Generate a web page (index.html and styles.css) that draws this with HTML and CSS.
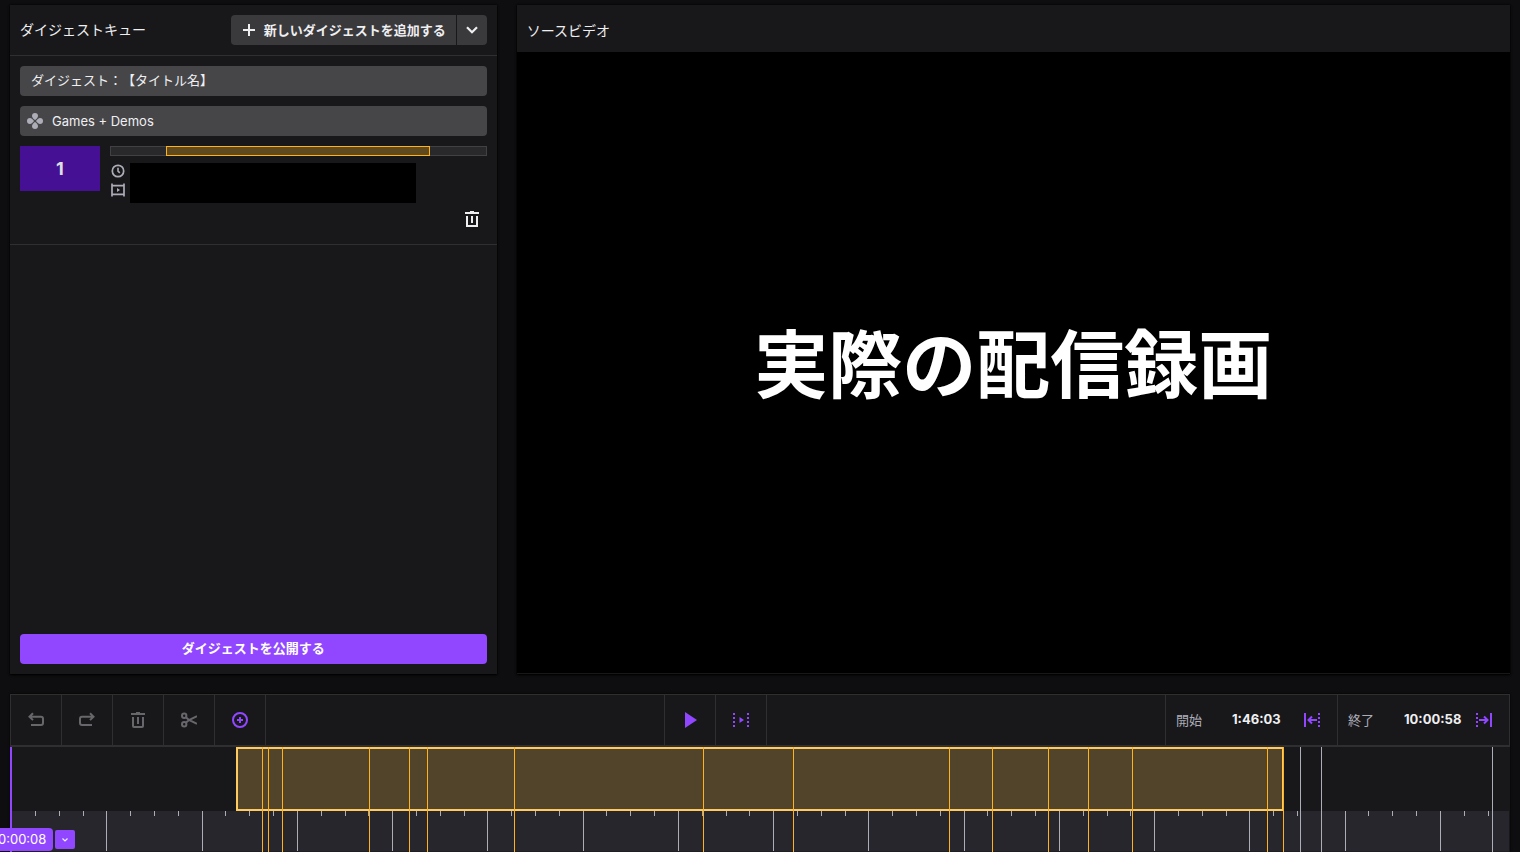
FILE: index.html
```html
<!DOCTYPE html>
<html lang="ja">
<head>
<meta charset="utf-8">
<title>ダイジェスト</title>
<link rel="stylesheet" href="styles.css">
</head>
<body>
<main class="workspace">
  <section class="panel queue">
    <header class="panel-header queue-header">
      <h2 class="panel-title">ダイジェストキュー</h2>
      <div class="split-button">
        <button class="split-main" type="button">
          <svg class="plus-icon" viewBox="0 0 12 12" aria-hidden="true"><path d="M6 0v12M0 6h12" stroke="currentColor" stroke-width="2" fill="none"/></svg>
          <span>新しいダイジェストを追加する</span>
        </button>
        <button class="split-toggle" type="button" aria-label="その他">
          <svg class="chevron" viewBox="0 0 12 8" aria-hidden="true"><path d="M1 1.200l5 5 5-5" stroke="currentColor" stroke-width="2.200" fill="none"/></svg>
        </button>
      </div>
    </header>
    <div class="entry">
      <input class="field field-title" type="text" value="ダイジェスト：【タイトル名】" aria-label="タイトル">
      <div class="category">
        <svg class="category-icon" viewBox="0 0 16 16" aria-hidden="true"><g fill="#adadb8"><path d="M8 0a3 3 0 0 1 3 3c0 1.500-1.500 3-3 4-1.500-1-3-2.500-3-4a3 3 0 0 1 3-3z"/><path d="M8 16a3 3 0 0 0 3-3c0-1.500-1.500-3-3-4-1.500 1-3 2.500-3 4a3 3 0 0 0 3 3z"/><path d="M0 8a3 3 0 0 1 3-3c1.500 0 3 1.500 4 3-1 1.500-2.500 3-4 3a3 3 0 0 1-3-3z"/><path d="M16 8a3 3 0 0 0-3-3c-1.500 0-3 1.500-4 3 1 1.500 2.500 3 4 3a3 3 0 0 0 3-3z"/></g></svg>
        <input class="field field-category" type="text" value="Games + Demos" aria-label="カテゴリー">
      </div>
      <div class="clip">
        <div class="clip-thumb">1</div>
        <div class="clip-body">
          <div class="clip-bar"><div class="clip-range"></div></div>
          <div class="clip-details">
            <div class="clip-icons">
              <svg class="icon14" viewBox="0 0 14 14" aria-hidden="true"><circle cx="7" cy="7" r="5.700" fill="none" stroke="currentColor" stroke-width="1.700"/><path d="M7 3.800v3.400l1.800 1.600" fill="none" stroke="currentColor" stroke-width="1.600"/></svg>
              <svg class="icon14" viewBox="0 0 14 14" aria-hidden="true"><path d="M1 .5v13M13 .5v13M1 2.700h12M1 11.300h12" fill="none" stroke="currentColor" stroke-width="1.700"/><path d="M6 5l3 2-3 2z" fill="currentColor"/></svg>
            </div>
            <div class="clip-mask"></div>
          </div>
        </div>
      </div>
      <div class="entry-actions">
        <button class="icon-button" type="button" aria-label="削除">
          <svg class="icon16" viewBox="0 0 16 16" aria-hidden="true"><path d="M1 2h14M6 .8h4M3 5v10h10V5M8 5v7" fill="none" stroke="currentColor" stroke-width="2"/></svg>
        </button>
      </div>
    </div>
    <footer class="queue-footer">
      <button class="publish" type="button">ダイジェストを公開する</button>
    </footer>
  </section>

  <section class="panel source">
    <header class="panel-header source-header"><h2 class="panel-title">ソースビデオ</h2></header>
    <div class="video"><p class="video-caption">実際の配信録画</p></div>
  </section>
</main>

<section class="editor">
  <div class="toolbar">
    <div class="tools tools-left">
      <button class="tool" type="button" aria-label="元に戻す" disabled><svg class="icon16" viewBox="0 0 16 16" aria-hidden="true"><path d="M5 1.300L1.500 4.700 5 8.100M1.500 4.700H13q2 0 2 2V11q0 2-2 2H3" fill="none" stroke="currentColor" stroke-width="2"/></svg></button>
      <button class="tool" type="button" aria-label="やり直す" disabled><svg class="icon16" viewBox="0 0 16 16" aria-hidden="true"><path d="M11 1.300l3.500 3.400L11 8.100M14.500 4.700H3q-2 0-2 2V11q0 2 2 2h10" fill="none" stroke="currentColor" stroke-width="2"/></svg></button>
      <button class="tool" type="button" aria-label="削除" disabled><svg class="icon16" viewBox="0 0 16 16" aria-hidden="true"><path d="M1 2h14M6 .8h4M3 5v9q0 1 1 1h8q1 0 1-1V5M8 5v7" fill="none" stroke="currentColor" stroke-width="2"/></svg></button>
      <button class="tool" type="button" aria-label="分割" disabled><svg class="icon16" viewBox="0 0 16 16" aria-hidden="true"><g fill="none" stroke="currentColor" stroke-width="2"><circle cx="3.200" cy="3.800" r="2.200"/><circle cx="3.200" cy="12.200" r="2.200"/><path d="M4.800 5.200L8 8l8 3.800M4.800 10.800L8 8l8-3.800"/></g></svg></button>
      <button class="tool accent" type="button" aria-label="セグメントを追加"><svg class="icon16" viewBox="0 0 16 16" aria-hidden="true"><circle cx="8" cy="8" r="7" fill="none" stroke="currentColor" stroke-width="2"/><path d="M8 5v6M5 8h6" stroke="currentColor" stroke-width="2"/></svg></button>
    </div>
    <div class="tools tools-center">
      <button class="tool accent" type="button" aria-label="再生"><svg class="icon16" viewBox="0 0 16 16" aria-hidden="true"><path d="M3 0l12 8L3 16z" fill="currentColor"/></svg></button>
      <button class="tool accent" type="button" aria-label="選択範囲を再生"><svg class="icon16" viewBox="0 0 16 16" aria-hidden="true"><path d="M1 1v14M15 1v14" stroke="currentColor" stroke-width="2" stroke-dasharray="2 2"/><path d="M6.500 5l4.500 3-4.500 3z" fill="currentColor"/></svg></button>
    </div>
    <div class="tools">
      <div class="time-cell">
        <label class="time-label" for="start">開始</label>
        <input class="time-input" id="start" type="text" value="1:46:03">
        <button class="time-button" type="button" aria-label="開始位置に設定"><svg class="icon16" viewBox="0 0 16 16" aria-hidden="true"><path d="M1 1v14M4.500 8H13M8 4.500L4.500 8 8 11.500" fill="none" stroke="currentColor" stroke-width="2"/><path d="M15 1v14" stroke="currentColor" stroke-width="2" stroke-dasharray="2 2"/></svg></button>
      </div>
      <div class="time-cell">
        <label class="time-label" for="end">終了</label>
        <input class="time-input" id="end" type="text" value="10:00:58">
        <button class="time-button" type="button" aria-label="終了位置に設定"><svg class="icon16" viewBox="0 0 16 16" aria-hidden="true"><path d="M15 1v14M11.500 8H3M8 4.500l3.500 3.500L8 11.500" fill="none" stroke="currentColor" stroke-width="2"/><path d="M1 1v14" stroke="currentColor" stroke-width="2" stroke-dasharray="2 2"/></svg></button>
      </div>
    </div>
  </div>
  <div class="timeline" id="timeline">
    <div class="lane"></div>
    <div class="ruler"></div>
    <div class="selection" id="selection"></div>
    <div class="playhead"></div>
    <div class="playhead-controls">
      <span class="playhead-time">0:00:08</span>
      <button class="playhead-toggle" type="button" aria-label="再生位置メニュー"><svg class="mini-chevron" viewBox="0 0 6 4" aria-hidden="true"><path d="M.5.5L3 3 5.500.5" stroke="currentColor" stroke-width="1.200" fill="none"/></svg></button>
    </div>
  </div>
</section>
<script src="timeline.js"></script>
</body>
</html>
```
FILE: styles.css
```css
* { box-sizing: border-box; }

body {
  margin: 0;
  height: 100vh;
  padding: 5px 10px 0;
  display: flex;
  flex-direction: column;
  gap: 20px;
  overflow: hidden;
  background: #0e0e10;
  color: #efeff1;
  font: 13px/20px Inter, "Noto Sans CJK JP", sans-serif;
}

button, input { font: inherit; color: inherit; }
button { border: 0; padding: 0; background: none; cursor: pointer; }
svg { display: block; }
h2, p { margin: 0; }

.workspace {
  flex: 1;
  min-height: 0;
  display: grid;
  grid-template-columns: minmax(0, 49fr) minmax(0, 100fr);
  gap: 20px;
}
.panel {
  display: flex;
  flex-direction: column;
  min-height: 0;
  background: #18181b;
  box-shadow: 0 1px 2px #000, 0 0 2px #000;
}
.panel-header {
  display: flex;
  align-items: center;
  justify-content: space-between;
  padding: 0 10px;
}
.panel-title { font-size: 14px; font-weight: 400; }
.queue-header { height: 51px; border-bottom: 1px solid #2f2f32; }
.source-header { height: 47px; padding-top: 4px; }

.split-button { display: flex; gap: 1px; height: 30px; }
.split-main, .split-toggle {
  display: flex;
  align-items: center;
  justify-content: center;
  background: #3a3a3d;
}
.split-main { gap: 9px; padding: 0 10px 0 12px; border-radius: 4px 0 0 4px; font-weight: 700; }
.split-toggle { width: 30px; border-radius: 0 4px 4px 0; }
.plus-icon { width: 12px; height: 12px; }
.chevron { width: 12px; height: 8px; }

.entry {
  display: flex;
  flex-direction: column;
  gap: 10px;
  padding: 10px;
  border-bottom: 1px solid #2f2f32;
}
.field {
  width: 100%;
  height: 30px;
  display: block;
  border: 0;
  border-radius: 4px;
  padding: 0 11px;
  background: #464649;
}
.field-title { padding-bottom: 4px; text-spacing-trim: space-all; }
.category { position: relative; }
.field-category { padding-left: 32px; }
.category-icon { position: absolute; left: 7px; top: 7px; width: 16px; height: 16px; }

.clip { display: flex; align-items: flex-start; gap: 10px; }
.clip-thumb {
  width: 80px;
  height: 45px;
  display: grid;
  place-items: center;
  background: #451093;
  color: #dedee3;
  font-size: 18px;
  font-weight: 700;
}
.clip-body { flex: 1; display: flex; flex-direction: column; gap: 7px; }
.clip-bar { height: 10px; background: #29292c; border: 1px solid #414144; }
.clip-range {
  height: 10px;
  margin: -1px 0 0 14.700%;
  width: 70.400%;
  background: #5f491f;
  border: 1px solid #ffb31a;
}
.clip-details { display: flex; gap: 5px; }
.clip-icons { display: flex; flex-direction: column; gap: 5px; padding: 1px 0 0 1px; color: #adadb8; }
.icon14 { width: 14px; height: 14px; }
.icon16 { width: 16px; height: 16px; }
.clip-mask { width: 76%; height: 40px; background: #000; }
.entry-actions { display: flex; justify-content: flex-end; margin-top: -9px; }
.icon-button { width: 30px; height: 30px; display: grid; place-items: center; }

.queue-footer { margin-top: auto; padding: 10px; }
.publish {
  width: 100%;
  height: 30px;
  padding-bottom: 2px;
  border-radius: 4px;
  background: #9147ff;
  color: #fff;
  font-weight: 700;
}

.video {
  flex: 1;
  display: grid;
  place-items: center;
  padding-top: 5px;
  margin-bottom: 1px;
  background: #000;
}
.video-caption { font-size: 74px; line-height: 80px; font-weight: 700; color: #fff; }

.editor { background: #18181b; box-shadow: 0 0 2px #000; }
.toolbar {
  display: flex;
  justify-content: space-between;
  height: 53px;
  border: 1px solid #2f2f32;
  border-bottom-width: 2px;
}
.tools { display: flex; }
.tool {
  width: 51px;
  display: grid;
  place-items: center;
  border-right: 1px solid #2f2f32;
  color: #67676b;
}
.tools-center { border-left: 1px solid #2f2f32; }
.accent, .time-button { color: #9147ff; }
.time-cell {
  display: flex;
  align-items: center;
  padding: 0 5px 0 10px;
  border-left: 1px solid #2f2f32;
}
.time-label { color: #adadb8; }
.time-input {
  width: 90px;
  border: 0;
  padding: 0 0 2px 30px;
  background: none;
  font-weight: 700;
}
.time-button { width: 40px; height: 30px; display: grid; place-items: center; }

.timeline {
  position: relative;
  margin: 0 1px;
}
.lane { height: 64px; }
.ruler { height: 41px; background: #26262c; border-bottom: 1px solid #1f1f23; }
.selection {
  position: absolute;
  top: 0;
  height: 64px;
  border: 2px solid #ffca5f;
  background: #52442a;
}
.tick { position: absolute; top: 64px; width: 1px; height: 5px; background: #adadb8; }
.tick-major { height: 40px; }
.marker { position: absolute; top: 0; bottom: 0; width: 1px; background: #adadb8; }
.marker-inside { background: #ffb31a; }
.playhead { position: absolute; top: 0; bottom: 0; left: -1px; width: 2px; background: #9147ff; }
.playhead-controls {
  position: absolute;
  left: -20px;
  bottom: 1px;
  display: flex;
  align-items: center;
  gap: 2px;
}
.playhead-time {
  height: 23px;
  padding: 0 7px;
  border-radius: 4px;
  background: #9147ff;
  color: #fff;
  line-height: 23px;
}
.playhead-toggle {
  width: 20px;
  height: 19px;
  display: grid;
  place-items: center;
  border-radius: 2px;
  background: #9147ff;
}
.mini-chevron { width: 6px; height: 4px; }
```
FILE: timeline.js
```js
const DURATION = 42463;
const START = 6385;
const END = 36080;
const TICK = 675;
const TICK_START = 4;

const markers = [
  7120, 7290, 7690, 10155, 11290, 11800, 14265, 19625, 22175,
  26600, 27815, 29405, 30540, 31785, 35610, 36065, 36550, 37145, 41990
];

const timeline = document.getElementById("timeline");
const playhead = timeline.querySelector(".playhead");
const percent = seconds => (seconds / DURATION * 100) + "%";

function addLine(className, seconds) {
  const line = document.createElement("div");
  line.className = className;
  line.style.left = percent(seconds);
  timeline.insertBefore(line, playhead);
}

const selection = document.getElementById("selection");
selection.style.left = percent(START);
selection.style.width = percent(END - START);

for (let i = 1; i * TICK < DURATION; i++) {
  addLine(i % 4 === 0 ? "tick tick-major" : "tick", TICK_START + i * TICK);
}
markers.forEach(s => addLine(s <= END ? "marker marker-inside" : "marker", s));
```
